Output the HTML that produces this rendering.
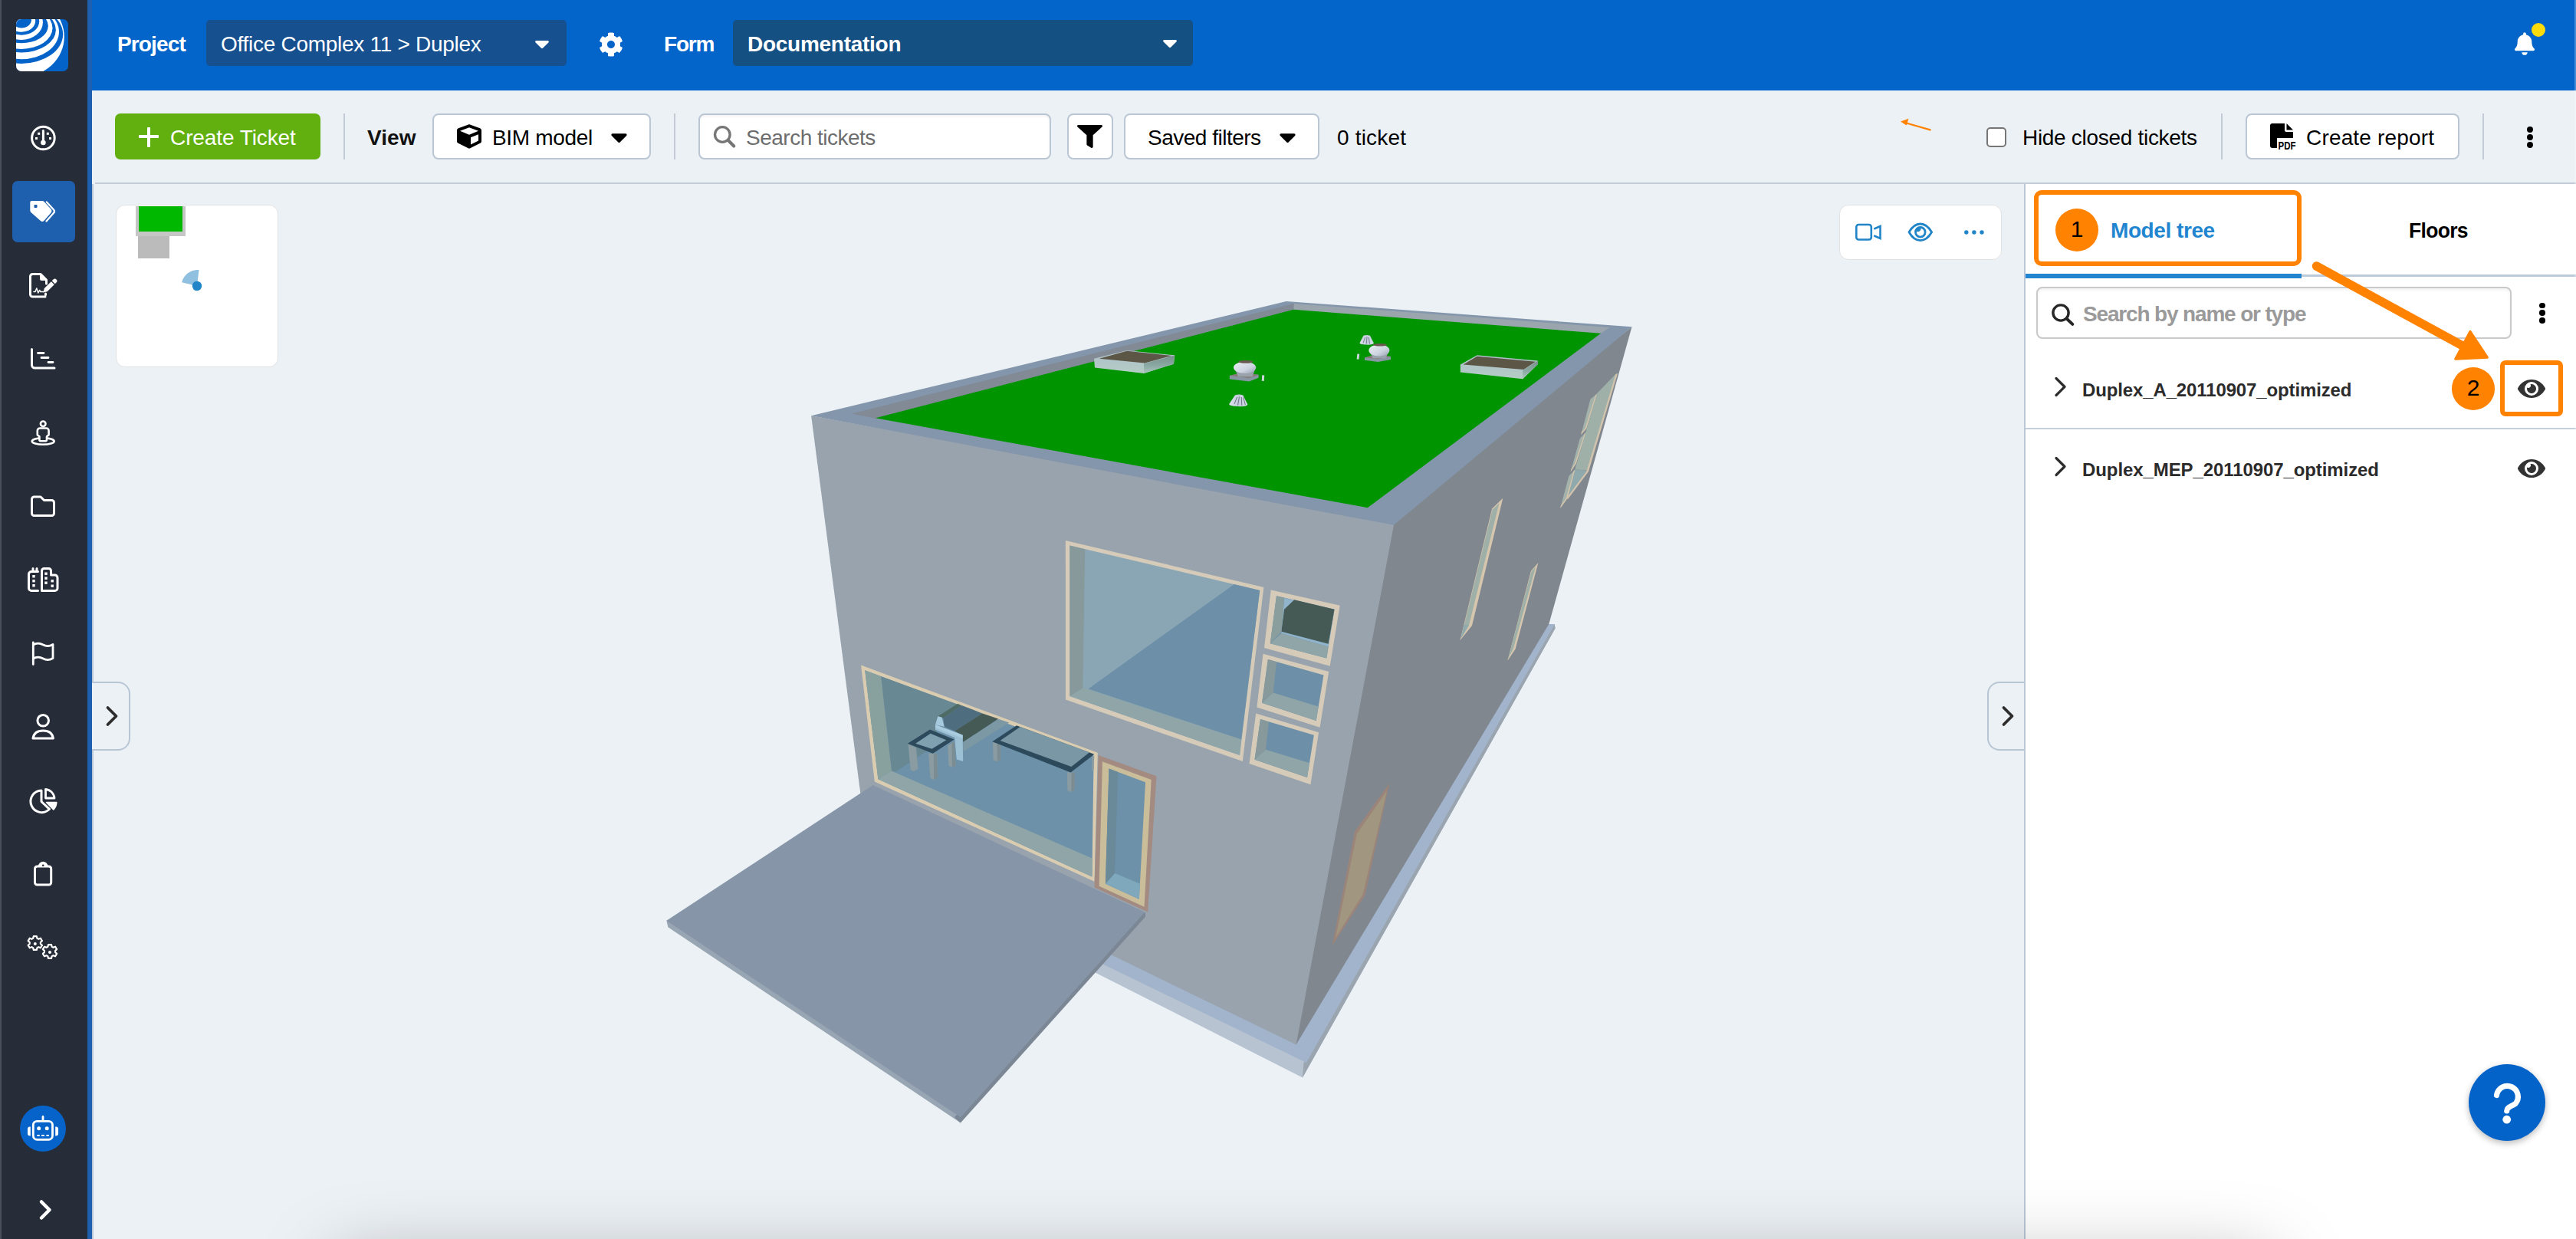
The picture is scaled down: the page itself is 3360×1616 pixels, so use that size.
<!DOCTYPE html>
<html><head><meta charset="utf-8"><title>BIM viewer</title>
<style>
html,body{margin:0;padding:0}
body{width:3360px;height:1616px;position:relative;overflow:hidden;background:#ecf1f5;font-family:"Liberation Sans",sans-serif;}
.a{position:absolute}
.t{position:absolute;white-space:nowrap;line-height:1;font-size:28px}
.b{font-weight:bold}
.w{color:#fff}
.btn{position:absolute;box-sizing:border-box;background:#fff;border:2px solid #bac6d3;border-radius:8px}
.vd{position:absolute;width:2px;background:#c3ccd6}
svg{position:absolute;overflow:visible}
</style></head><body>
<!-- BACKGROUND REGIONS -->
<div class="a" style="left:120px;top:0;width:3240px;height:118px;background:#0364c9"></div>
<div class="a" style="left:124px;top:238px;width:3236px;height:2px;background:#c3ccd6"></div>
<div class="a" style="left:120px;top:240px;width:2px;height:1376px;background:#bcc8d5"></div>
<!--BUILDING-->
<svg style="left:0;top:0" width="3360" height="1616" viewBox="0 0 3360 1616">
<!-- ground slab -->
<polygon points="1394.300,1251.200 1413.600,1228.100 1690.600,1362.600 2020.300,814 2027.600,814 2028.600,819.500 1699,1405.400" fill="#b7c3d1"/>
<polygon points="1700.500,1386.500 2027.600,814 2028.600,819.500 1699,1405.400" fill="#9aa5b0"/>
<polygon points="1413.600,1228.100 1690.600,1360 2018,814 2027.600,814 1703.900,1386.100 1402.700,1240.200" fill="#a2b4cc"/>
<!-- walls -->
<polygon points="1810,680 2128.500,426.300 2020.300,814 1690.600,1362.600 1686,1360" fill="#80878f"/>
<polygon points="1058.100,542.200 1818,681 1818,684.800 1690.600,1362.600 1129.500,1090" fill="#99a3ad"/>
<!-- roof -->
<polygon points="1058.100,542.200 1677.800,392.900 2128.500,426.300 1818,684.800" fill="#8496ab"/>
<polygon points="1111,539.600 1687.800,396 1689,404.500 1143,546" fill="#828a95"/>
<polygon points="1687.800,396 2099.700,427 2087,435.500 1687.300,404.500" fill="#9ba5ae"/>
<polygon points="1142,545.300 1687.300,403.800 2088.100,434.800 1783.900,662.300" fill="#009500"/>
<!--ROOFOBJ-->
<defs>
<linearGradient id="dm" x1="0" y1="0" x2="1" y2="1"><stop offset="0" stop-color="#eef1f5"/><stop offset=".6" stop-color="#cdd5e0"/><stop offset="1" stop-color="#98a2b2"/></linearGradient>
<linearGradient id="cn" x1="0" y1="0" x2="1" y2="0"><stop offset="0" stop-color="#dfe4ee"/><stop offset=".5" stop-color="#c3cbdb"/><stop offset="1" stop-color="#d5dbe8"/></linearGradient>
<linearGradient id="sf" x1="0" y1="0" x2="0" y2="1"><stop offset="0" stop-color="#aebfca"/><stop offset="1" stop-color="#b4cdc4"/></linearGradient><linearGradient id="sr" x1="0" y1="0" x2="0" y2="1"><stop offset="0" stop-color="#76908a"/><stop offset=".55" stop-color="#8aa9a2"/><stop offset="1" stop-color="#a9c6be"/></linearGradient>
</defs>
<!-- skylight 1 -->
<polygon points="1427,467.700 1469.900,457 1532.200,463.300 1531,474.700 1492,487 1428,479.400" fill="url(#sf)"/>
<polygon points="1492,474.200 1531.600,463.700 1531,474.700 1492,487" fill="url(#sr)"/>
<polygon points="1433.800,467.700 1469.900,457.800 1528.100,464 1493.200,473.600" fill="#5c5646"/>
<!-- skylight 2 -->
<polygon points="1904.800,475.600 1926.700,463.200 2006,470.400 2006,475 1986.100,494.200 1904.800,485.400" fill="url(#sf)"/>
<polygon points="1986.100,483.500 2006,470.400 2006,475 1986.100,494.200" fill="url(#sr)"/>
<polygon points="1908.600,475.600 1926.700,464.700 2002.900,471.700 1987.400,482" fill="#5c5646"/>
<!-- dome 1 -->
<polygon points="1603.800,489.900 1618,486.500 1641.600,488.700 1641.600,492.800 1629.400,497.400 1603.800,494.500" fill="#8896a4"/>
<polygon points="1603.800,489.900 1618,486.500 1641.600,488.700 1629.400,493" fill="#857a74"/>
<polygon points="1611,482 1637,482 1633.500,491.300 1615,491.300" fill="#9aa2ac"/>
<ellipse cx="1623.600" cy="479.300" rx="14.600" ry="7.600" fill="url(#dm)"/>
<ellipse cx="1624.800" cy="471.800" rx="9.800" ry="1.900" fill="#6a5a52"/>
<rect x="1646" y="489.300" width="3" height="7.600" fill="#d0d6de" transform="rotate(4 1647 493)"/>
<!-- dome 2 -->
<polygon points="1780,466.500 1794,462.500 1814,465 1814,469 1797.500,472 1780,469.800" fill="#8896a4"/>
<polygon points="1780,466.500 1794,462.500 1814,465 1797.500,468" fill="#857a74"/>
<polygon points="1787.300,459.500 1810.800,459.500 1807.500,467.300 1790.500,467.300" fill="#9aa2ac"/>
<ellipse cx="1798.900" cy="456.900" rx="13.500" ry="7.500" fill="url(#dm)"/>
<ellipse cx="1800" cy="449.800" rx="9" ry="1.800" fill="#6a5a52"/>
<rect x="1770" y="461.500" width="2.800" height="7" fill="#d0d6de" transform="rotate(6 1771 465)"/>
<!-- cones -->
<path d="M1610.800 515.500q5.200-1.800 10.500 0l6 12q-1 3.200-12.600 2.600t-11.500-3.200z" fill="url(#cn)"/>
<path d="M1613.500 518l-3.500 9M1616.500 517.500l-2 11M1619.300 518l.5 11M1621.800 518.500l2.500 9.500" stroke="#6d7686" stroke-width="1" fill="none"/>
<path d="M1778.500 437.800q4.200-1.500 8.400 0l5 9.800q-1 2.400-9.800 2t-8.600-2.400z" fill="url(#cn)"/>
<path d="M1780.500 440l-2.500 7.500M1783 439.500l-.8 9M1785.300 440l1.200 8.500" stroke="#6d7686" stroke-width=".9" fill="none"/>

<!--/ROOFOBJ-->
<!--FRONTWIN-->
<!-- big upper window -->
<polygon points="1389.900,705 1648.400,766 1620.800,993.100 1389.900,912.400" fill="#d5cbb8"/>
<polygon points="1395.400,711.400 1643.200,770 1617,985 1395.400,908" fill="#8aa6b5"/>
<polygon points="1609.800,762.100 1643.200,770 1619.100,964.600 1419.500,898.400" fill="#6d90a8"/>
<polygon points="1395.400,711.400 1415.200,716.300 1412.300,897.800 1395.400,908" fill="#87999a"/>
<polygon points="1395.400,908 1413.300,897.300 1619.100,964.600 1617,985" fill="#8fa5a8"/>
<!-- small windows -->
<polygon points="1657.700,769.500 1747.700,789.800 1734.700,868.800 1649,845" fill="#d5cbb8"/>
<polygon points="1665,777.300 1740.500,794.700 1730.300,858.600 1656.800,839.200" fill="#6d90a8"/>
<polygon points="1675.100,780 1740.500,794.700 1732.600,843.500 1671.400,826" fill="#8fb4cc"/>
<polygon points="1688.200,782.200 1740.500,794.700 1732.600,839.700 1671.400,823.800 1675.100,794.700" fill="#455955"/>
<polygon points="1665,777.300 1675.100,780 1671.400,823.800 1656.800,839.200" fill="#8b9e9e"/>
<polygon points="1656.800,839.200 1671.400,826 1732.600,843.500 1730.300,858.600" fill="#8fa5a8"/>
<polygon points="1647.500,852.800 1733.200,876 1721.600,948.700 1639.400,922.500" fill="#d5cbb8"/>
<polygon points="1653.900,860.100 1726.500,880.400 1716.700,940 1646.100,916.700" fill="#6d90a8"/>
<polygon points="1653.900,860.100 1665,863.600 1660.600,903.600 1646.100,916.700" fill="#87999a"/>
<polygon points="1646.100,916.700 1660.600,903.600 1719.600,921.600 1716.700,940" fill="#8fa5a8"/>
<polygon points="1638.200,930.400 1720.100,955.300 1709.400,1023.300 1629.500,996" fill="#d5cbb8"/>
<polygon points="1644,937.900 1713.800,958.800 1705,1014 1636.500,990.800" fill="#6d90a8"/>
<polygon points="1644,937.900 1654.800,941.400 1651,977.700 1636.500,990.800" fill="#87999a"/>
<polygon points="1636.500,990.800 1651,977.700 1707.700,995.100 1705,1014" fill="#8fa5a8"/>
<!-- lower window -->
<polygon points="1123,867.600 1431.800,981.700 1427.500,1149.700 1140.800,1019.400" fill="#d9ccb0"/>
<polygon points="1128.200,874.300 1426.600,985.700 1424.400,1143.600 1145.400,1016.300" fill="#6d91a9"/>
<polygon points="1149.100,882.300 1250.300,919.100 1223,935 1220,972 1169,1006.200 1162.900,1005.600" fill="#688894"/>
<polygon points="1128.200,874.300 1149.100,882.300 1162.900,1005.600 1145.400,1016.300" fill="#88a09e"/>
<polygon points="1145.400,1016.300 1162.900,1005.600 1425.100,1119.700 1424.400,1143.600" fill="#8fa5a8"/>
<!-- sofa -->
<polygon points="1256.200,967.800 1302.100,937.700 1316.300,942.600 1256.900,980.100" fill="#7b98a4"/>
<polygon points="1223.300,934.200 1249.100,918.100 1254.300,920 1230.400,936.800" fill="#4e6b66"/>
<polygon points="1230.400,936.800 1254.300,920 1281.400,930.400 1245.200,953.600 1231.700,947.800" fill="#4e6d7e"/>
<polygon points="1245.200,953.600 1281.400,930.400 1302.100,937.500 1256.200,967.800 1255.600,958.800" fill="#455955"/>
<polygon points="1223.300,934.200 1228.400,935.500 1231.700,947.800 1220,945.200" fill="#a6cade"/>
<polygon points="1220,945.200 1255.600,958.800 1256.200,993 1247.800,990.400 1245.200,962 1220,951.700" fill="#9cc0d4"/>
<polygon points="1220,945.200 1255.600,958.800 1255.700,963 1220,949" fill="#aacde0"/>
<!-- side table -->
<polygon points="1184.500,970.800 1194.900,974.900 1197.500,1002.700 1191.600,1005.900 1187.800,1004" fill="#8a9ca2"/>
<polygon points="1211,982.700 1222,982.700 1223.300,1013.700 1218.100,1016.900 1213.600,1014.900" fill="#8a9ca2"/>
<polygon points="1218,983 1222,982.700 1223.300,1013.700 1218.100,1016.900" fill="#7b8d92"/>
<polygon points="1236.200,972.300 1244.600,967.200 1246.500,998.200 1242,1000.700 1237.500,998.800" fill="#8a9ca2"/>
<polygon points="1241.500,969.500 1244.600,967.200 1246.500,998.200 1242,1000.700" fill="#7b8d92"/>
<polygon points="1183.900,969.700 1213,951.400 1244.600,964.600 1216.800,982.700" fill="#2c4a5c"/>
<polygon points="1194.200,969.700 1213.600,956.800 1234.300,965.200 1215.500,976.800" fill="#7fa0ae"/>
<!-- long table -->
<polygon points="1295,968.400 1304.600,969.700 1305.300,990.400 1300.800,993.600 1295.600,991" fill="#8a9ca2"/>
<polygon points="1300.500,969 1304.600,969.700 1305.300,990.400 1300.800,993.600" fill="#7b8d92"/>
<polygon points="1391.800,1007.200 1402.200,1007.800 1401.500,1030.400 1397.400,1033 1392.500,1031.100" fill="#8a9ca2"/>
<polygon points="1397.500,1007.500 1402.200,1007.800 1401.500,1030.400 1397.400,1033" fill="#7b8d92"/>
<polygon points="1424.100,987.800 1427.300,985.200 1426.700,1004.600 1424.100,1005.300" fill="#8a9ca2"/>
<polygon points="1294.300,967.200 1326,946.200 1427.300,983.700 1396.600,1007.500" fill="#2c4a5c"/>
<polygon points="1304.600,966.100 1330.700,948 1421.100,981.300 1397.400,1000.100" fill="#7a97a5"/>
<!-- door -->
<polygon points="1432.700,985 1508.500,1012.300 1497.100,1189.600 1427.500,1157.400" fill="#a38b82"/>
<polygon points="1437.900,993.300 1501.700,1016.900 1492.500,1182.800 1433.600,1155.800" fill="#c9bd9a"/>
<polygon points="1446.500,1002.500 1494,1020.300 1485.800,1172.700 1441.900,1152.800" fill="#6d91a9"/>
<polygon points="1446.500,1002.500 1458.200,1007.100 1454.200,1139 1441.900,1152.800" fill="#6a8a9a"/>
<polygon points="1441.900,1152.800 1454.200,1139 1487,1152.800 1485.800,1172.700" fill="#7fa8bc"/>

<!--/FRONTWIN-->
<!--RIGHTWIN-->
<!-- right wall: window A -->
<polygon points="2082.900,513.200 2108.300,487 2071,614.100 2054.400,612" fill="#9eb0a8"/>
<polygon points="2054.400,612 2069.500,613.900 2044.700,649.700" fill="#8fa9ad"/>
<polygon points="2107.300,488 2110,486.900 2072,615 2044.900,651.300 2043.600,649.300 2069.300,614.800" fill="#d2c3ac"/>
<polygon points="2074.400,520.800 2082.900,513.700 2069.300,559 2062.200,566.900" fill="#a3b3ab"/>
<polygon points="2081,515.300 2082.900,513.700 2069.300,559 2062.200,566.900 2062.900,563.500 2067.500,558.500" fill="#d2c3ac"/>
<polygon points="2060.800,571.700 2068.500,564.100 2055.800,604.700 2048.600,615.400" fill="#a3b3ab"/>
<polygon points="2066.600,566 2068.500,564.100 2055.800,604.700 2048.600,615.400 2049.300,612 2054,604.500" fill="#d2c3ac"/>
<polygon points="2046.400,620.800 2054.400,612.400 2044.700,649.700 2035.100,662.900" fill="#a3b3ab"/>
<polygon points="2052.500,614.400 2054.400,612.400 2044.700,649.700 2035.100,662.900 2036,659 2042.800,649.500" fill="#d2c3ac"/>
<!-- window B -->
<polygon points="1946.100,663.400 1960.300,649.800 1920,815.900 1904.400,835.300" fill="#d6c6ae"/>
<polygon points="1946.600,664.800 1955.500,656.300 1916,815.500 1905.600,832.500" fill="#9eb0a8"/>
<polygon points="1905.600,832.500 1909.500,815 1916,815.500" fill="#8fa9ad"/>
<!-- window C -->
<polygon points="1996.900,744.700 2006.400,733.900 1976.600,846.400 1966.400,861.700" fill="#d6c6ae"/>
<polygon points="1997.300,745.800 2003,739.500 1973.800,846.500 1967.300,858.500" fill="#9eb0a8"/>
<!-- side door -->
<polygon points="1767,1084.400 1812.200,1021.800 1780.600,1167.600 1737.600,1233.600" fill="#9b857a"/>
<polygon points="1769.900,1087.300 1808.800,1032 1777.600,1166.400 1742.100,1222.900" fill="#a1967f"/>

<!--/RIGHTWIN-->
<!-- terrace -->
<polygon points="869.400,1200.700 880,1200 1252.900,1450 1252.900,1464.600 871.300,1209.200" fill="#98a5b3"/>
<polygon points="1245,1457.200 1486,1189.800 1494,1190.500 1494,1195.700 1252.900,1464.600" fill="#7b8794"/>
<polygon points="1138.600,1024 1493.200,1189.800 1252.900,1457.200 869.400,1200.700" fill="#8795a8"/>
</svg>

<!--/BUILDING-->
<!--CANVASUI-->
<!-- minimap -->
<div class="a" style="left:151px;top:267px;width:212px;height:212px;box-sizing:border-box;background:#fff;border:1px solid #e2e2e2;border-radius:12px;overflow:hidden">
<div class="a" style="left:25px;top:1px;width:65px;height:39px;background:#c6c6c6"></div>
<div class="a" style="left:29px;top:1px;width:57px;height:33px;background:#00b800"></div>
<div class="a" style="left:28px;top:40px;width:41px;height:29px;background:#bbb"></div>
</div>
<svg style="left:151px;top:267px" width="212" height="212" viewBox="151 267 212 212"><path d="M257 373L237.200 368.200A21 21 0 0 1 259.500 352z" fill="#90c0e0"/><circle cx="257" cy="373" r="6.200" fill="#2185c8"/></svg>
<!-- viewer tools -->
<div class="a" style="left:2399px;top:267px;width:212px;height:72px;box-sizing:border-box;background:#fff;border:1px solid #e2e2e2;border-radius:12px"></div>
<svg style="left:2399px;top:267px" width="212" height="72" viewBox="2399 267 212 72" fill="none" stroke="#2185c8" stroke-width="2.600" stroke-linejoin="round" stroke-linecap="round">
<rect x="2421.300" y="293" width="19.500" height="19.500" rx="3"/>
<path d="M2445.200 298.200l7.300-3.200v16l-7.300-3.200" stroke-linejoin="miter"/>
<path d="M2490 302.800c4-7 9-10.800 14.800-10.800s10.800 3.800 14.800 10.800c-4 7-9 10.800-14.800 10.800s-10.800-3.800-14.800-10.800z" stroke-width="2.800"/>
<circle cx="2504.800" cy="302.800" r="6.300" stroke-width="2.800"/>
<path d="M2504.800 296.500a6.300 6.300 0 0 0-6 4.300a3.700 3.700 0 0 0 6-4.300z" fill="#2185c8" stroke="none"/>
<g fill="#2185c8" stroke="none"><circle cx="2564.800" cy="303" r="2.700"/><circle cx="2574.900" cy="303" r="2.700"/><circle cx="2585" cy="303" r="2.700"/></g>
</svg>
<!-- expand buttons -->
<div class="a" style="left:120px;top:889px;width:50px;height:90px;box-sizing:border-box;border:2px solid #b7c5d4;border-left:none;border-radius:0 16px 16px 0;background:#ecf1f5"></div>
<svg style="left:136px;top:919px" width="20" height="30" viewBox="0 0 20 30"><path d="M4.500 4l11 11-11 11" fill="none" stroke="#2d2d2d" stroke-width="3.800" stroke-linecap="round" stroke-linejoin="round"/></svg>
<div class="a" style="left:2592px;top:889px;width:50px;height:90px;box-sizing:border-box;border:2px solid #b7c5d4;border-right:none;border-radius:16px 0 0 16px;background:#ecf1f5"></div>
<svg style="left:2609px;top:919px" width="20" height="30" viewBox="0 0 20 30"><path d="M4.500 4l11 11-11 11" fill="none" stroke="#2d2d2d" stroke-width="3.800" stroke-linecap="round" stroke-linejoin="round"/></svg>

<!--/CANVASUI-->
<!-- RIGHT PANEL -->
<div class="a" style="left:2640px;top:240px;width:720px;height:1376px;background:#fff;border-left:2px solid #b9c7d6;box-sizing:border-box"></div>
<!--PANEL-->
<!-- tabs underline -->
<div class="a" style="left:2642px;top:358px;width:718px;height:3px;background:#bccbd9"></div>
<div class="a" style="left:2642px;top:357px;width:360px;height:6px;background:#2185d0"></div>
<!-- orange box 1 -->
<div class="a" style="left:2653px;top:248px;width:349px;height:99px;box-sizing:border-box;border:6px solid #ff8200;border-radius:10px"></div>
<div class="a" style="left:2681px;top:272px;width:56px;height:56px;border-radius:50%;background:#ff8200"></div>
<span class="t" style="left:2681px;top:284px;width:56px;text-align:center;font-size:30px;color:#000">1</span>
<span class="t b" style="left:2753px;top:287px;color:#2185d0;letter-spacing:-0.43px">Model tree</span>
<span class="t b" style="left:3142px;top:287px;color:#000;letter-spacing:-0.7px;transform:scaleX(.945);transform-origin:0 0">Floors</span>
<!-- search -->
<div class="a" style="left:2656px;top:374px;width:620px;height:68px;box-sizing:border-box;background:#fff;border:2px solid #c9c9c9;border-radius:8px;box-shadow:inset 0 2px 4px rgba(0,0,0,.06)"></div>
<svg style="left:2675px;top:396px" width="32" height="32" viewBox="0 0 32 32" fill="none" stroke="#262626" stroke-linecap="round"><circle cx="13" cy="12" r="10.100" stroke-width="3.400"/><path d="M20.500 19.500l7.800 7.400" stroke-width="4"/></svg>
<span class="t b" style="left:2717px;top:396px;color:#9a9a9a;letter-spacing:-1.16px">Search by name or type</span>
<div class="a" style="left:3312px;top:394.500px;width:7.500px;height:7.500px;border-radius:50%;background:#000"></div>
<div class="a" style="left:3312px;top:404.300px;width:7.500px;height:7.500px;border-radius:50%;background:#000"></div>
<div class="a" style="left:3312px;top:414px;width:7.500px;height:7.500px;border-radius:50%;background:#000"></div>
<!-- rows -->
<svg style="left:2678px;top:490px" width="20" height="30" viewBox="0 0 20 30"><path d="M4 3.500l11 11-11 11" fill="none" stroke="#2d2d2d" stroke-width="3.200" stroke-linecap="round" stroke-linejoin="round"/></svg>
<span class="t b" style="left:2716px;top:496.500px;font-size:24px;color:#2b2b2b;letter-spacing:-0.13px">Duplex_A_20110907_optimized</span>
<div class="a" style="left:3198px;top:479px;width:56px;height:56px;border-radius:50%;background:#ff8200"></div>
<span class="t" style="left:3198px;top:491px;width:56px;text-align:center;font-size:30px;color:#000">2</span>
<div class="a" style="left:3261px;top:470px;width:82px;height:73px;box-sizing:border-box;border:6px solid #ff8200;border-radius:7px"></div>
<svg style="left:3284px;top:491px" width="36" height="32" viewBox="0 0 576 512"><path fill="#333" d="M572.520 241.400C518.290 135.590 410.930 64 288 64S57.680 135.640 3.480 241.410a32.350 32.350 0 0 0 0 29.190C57.710 376.410 165.070 448 288 448s230.320-71.640 284.520-177.410a32.350 32.350 0 0 0 0-29.190zM288 400a144 144 0 1 1 144-144 143.930 143.930 0 0 1-144 144zm0-240a95.310 95.310 0 0 0-25.310 3.790 47.850 47.850 0 0 1-66.900 66.900A95.780 95.780 0 1 0 288 160z"/></svg>
<div class="a" style="left:2642px;top:558px;width:718px;height:2px;background:#c3cfdb"></div>
<svg style="left:2678px;top:594px" width="20" height="30" viewBox="0 0 20 30"><path d="M4 3.500l11 11-11 11" fill="none" stroke="#2d2d2d" stroke-width="3.200" stroke-linecap="round" stroke-linejoin="round"/></svg>
<span class="t b" style="left:2716px;top:600.500px;font-size:24px;color:#2b2b2b;letter-spacing:-0.09px">Duplex_MEP_20110907_optimized</span>
<svg style="left:3284px;top:595px" width="36" height="32" viewBox="0 0 576 512"><path fill="#333" d="M572.520 241.400C518.290 135.590 410.930 64 288 64S57.680 135.640 3.480 241.410a32.350 32.350 0 0 0 0 29.190C57.710 376.410 165.070 448 288 448s230.320-71.640 284.520-177.410a32.350 32.350 0 0 0 0-29.190zM288 400a144 144 0 1 1 144-144 143.930 143.930 0 0 1-144 144zm0-240a95.310 95.310 0 0 0-25.310 3.790 47.850 47.850 0 0 1-66.900 66.900A95.780 95.780 0 1 0 288 160z"/></svg>
<!-- arrow -->
<svg style="left:3000px;top:330px" width="260" height="150" viewBox="3000 330 260 150"><path d="M3021.600 347.100L3213 451.500" stroke="#ff8200" stroke-width="11.600" stroke-linecap="round" fill="none"/><path d="M3222 432.300L3244.400 466.200L3202.700 468.200z" fill="#ff8200" stroke="#ff8200" stroke-width="3" stroke-linejoin="round"/></svg>
<!-- help -->
<div class="a" style="left:3220px;top:1388px;width:100px;height:100px;border-radius:50%;background:#0363c9;box-shadow:0 3px 9px rgba(0,0,0,.28)"></div>
<svg style="left:3220px;top:1388px" width="100" height="100" viewBox="3220 1388 100 100"><path d="M3256.500 1428.500A14 14 0 1 1 3281 1439.500C3275 1443.500 3269.700 1444 3269.700 1449" fill="none" stroke="#fff" stroke-width="7.200" stroke-linecap="round"/><circle cx="3269.700" cy="1460.200" r="5.400" fill="#fff"/></svg>

<!--/PANEL-->
<!--SHADOW-->
<div class="a" style="left:440px;top:1650px;width:2520px;height:100px;box-shadow:0 0 100px 0 rgba(0,0,0,.34)"></div>
<div class="a" style="left:3358px;top:0;width:2px;height:1616px;background:rgba(255,255,255,.25)"></div>

<!--/SHADOW-->
<!-- SIDEBAR -->
<div class="a" style="left:0;top:0;width:114px;height:1616px;background:#262c38"></div>
<div class="a" style="left:0;top:0;width:2px;height:1616px;background:#4a4f59"></div>
<div class="a" style="left:114px;top:0;width:6px;height:1616px;background:#1e60b0"></div>
<!--SIDEBAR-->
<svg style="left:0;top:0" width="114" height="1616" viewBox="0 0 114 1616" fill="none" stroke="#fff" stroke-width="3" stroke-linecap="round" stroke-linejoin="round">
<!-- logo -->
<defs><clipPath id="lg"><rect x="21" y="25" width="68" height="68" rx="7"/></clipPath></defs>
<g clip-path="url(#lg)" stroke="none">
<rect x="21" y="25" width="68" height="68" fill="#0363c9"/>
<ellipse cx="27.91" cy="48.05" rx="55.86" ry="52.26" fill="#fff"/>
<ellipse cx="27.91" cy="44.82" rx="54.25" ry="38.08" fill="#0363c9"/>
<ellipse cx="27.91" cy="41.60" rx="49.07" ry="35.54" fill="#fff"/>
<ellipse cx="27.91" cy="39.01" rx="44.97" ry="29.41" fill="#0363c9"/>
<ellipse cx="27.91" cy="36.43" rx="40.59" ry="27.52" fill="#fff"/>
<ellipse cx="27.91" cy="33.85" rx="34.93" ry="22.40" fill="#0363c9"/>
<ellipse cx="27.91" cy="29.33" rx="28.00" ry="22.66" fill="#fff"/>
<ellipse cx="27.91" cy="28.04" rx="23.31" ry="17.59" fill="#0363c9"/>
<ellipse cx="27.91" cy="27.07" rx="18.29" ry="14.66" fill="#fff"/>
<ellipse cx="27.91" cy="26.10" rx="13.01" ry="10.32" fill="#0363c9"/>
</g>
<!-- gauge -->
<circle cx="56.400" cy="180" r="14.800"/>
<path d="M56.400 170.500V184" stroke-width="3"/>
<circle cx="56.400" cy="186" r="3.300" fill="#fff" stroke="none"/>
<g fill="#fff" stroke="none"><rect x="46" y="179" width="3" height="3"/><rect x="49.200" y="172.800" width="3" height="3"/><rect x="60.800" y="172.800" width="3" height="3"/><rect x="64" y="179" width="3" height="3"/></g>
<!-- active tags -->
<rect x="16" y="236" width="82" height="80" rx="7" fill="#1e5fae" stroke="none"/>
<path d="M41.500 262h13.800a3 3 0 0 1 2.200 1l9 9.800a3.500 3.500 0 0 1 0 4.600l-9 10.300a3.200 3.200 0 0 1-4.600.2L40.400 277a3.500 3.500 0 0 1-1.100-2.500V264.300a2.200 2.200 0 0 1 2.200-2.300z" fill="#fff" stroke="none"/>
<rect x="44.500" y="267" width="4" height="4" rx=".8" fill="#1e5fae" stroke="none"/>
<path d="M60.800 263.500l9.200 10a3.200 3.200 0 0 1 0 4.300l-9.500 10.700" stroke-width="2.300"/>
<!-- doc sign -->
<path d="M59 387H42.500a3 3 0 0 1-3-3V360.500a3 3 0 0 1 3-3H53l7.500 7.500v5M59.500 383v1.500" stroke-width="3"/>
<path d="M52 357.500v6a2.500 2.500 0 0 0 2.500 2.500H60.500z" fill="#fff" stroke="none"/>
<path d="M44 380.500h2l1.800-4.500 2 6 1.800-3.500 1.200 2h4" stroke-width="1.500"/>
<path d="M56.500 381.500l1.200-5.200 11.800-11.800a2.800 2.800 0 0 1 4 4L61.700 380.300z" fill="#fff" stroke="none"/>
<path d="M67.300 366.700l4 4" stroke="#262c38" stroke-width="1.300"/>
<!-- gantt -->
<path d="M41.500 455.500v20.500a4 4 0 0 0 4 4H71"/>
<path d="M49.500 460.500h7.500M54 466.500h9M63 472.500h6" stroke-width="2.800"/>
<!-- person pin -->
<ellipse cx="56.200" cy="575.500" rx="14.500" ry="4.300" stroke-width="2.600"/>
<path d="M52 558.500h8.400a3.200 3.200 0 0 1 3.200 3.200v5.500l-2.600 2v4.300a1.800 1.800 0 0 1-1.800 1.800h-6a1.800 1.800 0 0 1-1.800-1.800v-4.300l-2.600-2v-5.500a3.200 3.200 0 0 1 3.200-3.200z" fill="#262c38" stroke-width="2.600"/>
<circle cx="56.200" cy="552.800" r="3.300" stroke-width="2.600"/>
<!-- folder -->
<path d="M41.500 651a3 3 0 0 1 3-3h8.500l4.500 4.500h10a3 3 0 0 1 3 3v14a3 3 0 0 1-3 3h-23a3 3 0 0 1-3-3z"/>
<!-- buildings -->
<path d="M49.500 770.500h-8.500a3.500 3.500 0 0 1-3.500-3.500v-18a3.500 3.500 0 0 1 3.500-3.500h8.500M43 745.500v-4M48 745.500v-4" stroke-width="3"/>
<path d="M54.500 744.500a3 3 0 0 1 3-3h6a3 3 0 0 1 3 3v5.500h5a3.500 3.500 0 0 1 3.500 3.500v13.500a3.500 3.500 0 0 1-3.500 3.500h-17z" stroke-width="3"/>
<g fill="#fff" stroke="none"><rect x="42.300" y="750" width="3.400" height="3.400"/><rect x="42.300" y="756" width="3.400" height="3.400"/><rect x="42.300" y="762" width="3.400" height="3.400"/><rect x="58.300" y="746.500" width="3.400" height="3.400"/><rect x="58.300" y="752.500" width="3.400" height="3.400"/><rect x="58.300" y="758.500" width="3.400" height="3.400"/><rect x="66.500" y="756" width="3.400" height="3.400"/><rect x="66.500" y="762.500" width="3.400" height="3.400"/></g>
<!-- flag -->
<path d="M43.300 838v28.500M43.300 841c4-2.500 8.500-2.500 13 0s8.500 2 12.700-.5v18c-4.200 2.500-8.200 3-12.700.5s-9-2.500-13 0" stroke-width="2.800"/>
<!-- user -->
<circle cx="56.200" cy="939.800" r="7.300" stroke-width="3"/>
<path d="M43 963c1-6.500 6-10 13.200-10s12.200 3.500 13.200 10z" stroke-width="3"/>
<!-- pie -->
<path d="M54 1031a14.300 14.300 0 1 0 10.500 24.300L54 1045.500z" stroke-width="3"/>
<path d="M59.500 1029.500a12.500 12.500 0 0 1 11.500 11.500H59.500z" stroke-width="2.800"/>
<path d="M60.500 1046.500h13.300a14 14 0 0 1-4 9.500z" fill="#fff" stroke-width="1.500"/>
<!-- clipboard -->
<rect x="45.500" y="1130" width="21.200" height="24" rx="3"/>
<path d="M51 1130a5.200 5.200 0 0 1 10.400 0z" fill="#fff" stroke-width="2"/>
<circle cx="56.200" cy="1128.800" r="1.300" fill="#262c38" stroke="none"/>
<!-- gears -->
<g stroke-width="2.200">
<path id="gr" d="M-2-9.800h4l.7 2.700 1.700.9 2.700-1.100 2 3.400-2 1.900v2l2 1.900-2 3.400-2.700-1.100-1.700.9-.7 2.800h-4l-.7-2.800-1.700-.9-2.700 1.100-2-3.400 2-1.900v-2l-2-1.900 2-3.400 2.700 1.100 1.700-.9z" transform="translate(45.800 1231)"/>
<path d="M-2-9.800h4l.7 2.700 1.700.9 2.700-1.100 2 3.400-2 1.900v2l2 1.900-2 3.400-2.700-1.100-1.700.9-.7 2.800h-4l-.7-2.800-1.700-.9-2.700 1.100-2-3.400 2-1.900v-2l-2-1.900 2-3.400 2.700 1.100 1.700-.9z" transform="translate(65 1242)"/>
</g>
<circle cx="45.800" cy="1231" r="2" fill="#fff" stroke="none"/><circle cx="65" cy="1242" r="2" fill="#fff" stroke="none"/>
<!-- robot -->
<circle cx="56" cy="1472" r="30" fill="#0563c9" stroke="none"/>
<rect x="43.300" y="1462.300" width="25.200" height="24" rx="5" stroke-width="2.800"/>
<path d="M56 1456.500v5" stroke-width="2.800"/>
<path d="M39.800 1469.500h-.8a3 3 0 0 0-3 3v6a3 3 0 0 0 3 3h.8zM72.200 1469.500h.8a3 3 0 0 1 3 3v6a3 3 0 0 1-3 3h-.8z" fill="#fff" stroke="none"/>
<circle cx="50.700" cy="1471.800" r="2.500" fill="#fff" stroke="none"/><circle cx="61.200" cy="1471.800" r="2.500" fill="#fff" stroke="none"/>
<path d="M48.300 1481h3.400M54 1481h4M60.400 1481h3.400" stroke-width="2" stroke-linecap="butt"/>
<!-- chevron -->
<path d="M54 1567.500l10.500 10.500-10.500 10.500" stroke-width="4.500"/>
</svg>

<!--/SIDEBAR-->
<!--HEADER-->
<span class="t b w" style="left:153px;top:44px;letter-spacing:-0.87px">Project</span>
<div class="a" style="left:269px;top:26px;width:470px;height:60px;background:#17508f;border-radius:5px"></div>
<span class="t w" style="left:288px;top:44px;letter-spacing:-0.28px">Office Complex 11 &gt; Duplex</span>
<svg style="left:697px;top:52px" width="20" height="13" viewBox="0 0 20 13"><path d="M2.6 1h14.8c1.3 0 1.9 1.5 1 2.4l-7.4 7.4c-.6.6-1.4.6-2 0L1.600 3.400C.7 2.500 1.300 1 2.600 1z" fill="#fff"/></svg>
<svg style="left:781px;top:42px" width="32" height="32" viewBox="0 0 512 512"><path fill="#fff" d="M487.4 315.7l-42.6-24.6c4.3-23.2 4.3-47 0-70.2l42.600-24.600c4.900-2.800 7.100-8.600 5.500-14-11.100-35.600-30-67.800-54.700-94.600-3.800-4.100-10-5.100-14.800-2.300L380.800 110c-17.900-15.400-38.500-27.300-60.800-35.100V25.800c0-5.600-3.900-10.500-9.400-11.700-36.700-8.200-74.300-7.800-109.200 0-5.500 1.200-9.400 6.100-9.400 11.700V75c-22.200 7.900-42.800 19.800-60.800 35.100L88.700 85.500c-4.900-2.800-11-1.900-14.800 2.300-24.700 26.700-43.600 58.900-54.700 94.600-1.700 5.400.6 11.200 5.500 14L67.300 221c-4.300 23.200-4.300 47 0 70.200l-42.600 24.600c-4.900 2.800-7.100 8.600-5.500 14 11.100 35.600 30 67.800 54.700 94.600 3.800 4.100 10 5.100 14.800 2.300l42.600-24.600c17.900 15.400 38.500 27.300 60.800 35.100v49.200c0 5.600 3.900 10.500 9.400 11.700 36.700 8.200 74.300 7.800 109.200 0 5.500-1.200 9.400-6.100 9.400-11.700v-49.200c22.200-7.900 42.800-19.800 60.800-35.100l42.600 24.600c4.900 2.800 11 1.900 14.800-2.300 24.700-26.700 43.600-58.900 54.700-94.600 1.500-5.500-.7-11.300-5.600-14.100zM256 336c-44.100 0-80-35.900-80-80s35.900-80 80-80 80 35.900 80 80-35.900 80-80 80z"/></svg>
<span class="t b w" style="left:866px;top:44px;letter-spacing:-1.17px">Form</span>
<div class="a" style="left:956px;top:26px;width:600px;height:60px;background:#155082;border-radius:5px"></div>
<span class="t b w" style="left:975px;top:44px;letter-spacing:-0.27px">Documentation</span>
<svg style="left:1516px;top:51px" width="20" height="13" viewBox="0 0 20 13"><path d="M2.6 1h14.8c1.3 0 1.9 1.5 1 2.4l-7.4 7.4c-.6.6-1.4.6-2 0L1.600 3.400C.7 2.500 1.300 1 2.600 1z" fill="#fff"/></svg>
<svg style="left:3280px;top:42px" width="26" height="30" viewBox="0 0 448 512"><path fill="#fff" d="M224 512c35.320 0 63.970-28.650 63.970-64H160.030c0 35.350 28.650 64 63.970 64zm215.390-149.710c-19.320-20.760-55.470-51.990-55.470-154.290 0-77.700-54.480-139.900-127.940-155.160V32c0-17.670-14.320-32-31.980-32s-31.980 14.330-31.980 32v20.840C118.560 68.100 64.080 130.300 64.080 208c0 102.300-36.150 133.530-55.470 154.290-6 6.450-8.660 14.160-8.610 21.710.110 16.400 12.980 32 32.100 32h383.800c19.120 0 32-15.600 32.100-32 .050-7.550-2.610-15.270-8.610-21.710z"/></svg>
<div class="a" style="left:3302px;top:30px;width:18px;height:18px;border-radius:50%;background:#ffdb08"></div>

<!--/HEADER-->
<!--TOOLBAR-->
<div class="a" style="left:150px;top:148px;width:268px;height:60px;background:#62b010;border-radius:7px"></div>
<div class="a" style="left:181px;top:176px;width:26px;height:4px;background:#fff;border-radius:1px"></div>
<div class="a" style="left:192px;top:165.600px;width:4px;height:26px;background:#fff;border-radius:1px"></div>
<span class="t w" style="left:222px;top:165.600px;letter-spacing:-0.09px">Create Ticket</span>
<div class="vd" style="left:448px;top:148px;height:60px"></div>
<span class="t b" style="left:479px;top:165.600px;color:#111;letter-spacing:0.06px">View</span>
<div class="btn" style="left:564px;top:148px;width:285px;height:60px"></div>
<svg style="left:596px;top:162px" width="32" height="32" viewBox="0 0 512 512"><path fill="#000" d="M239.100 6.300l-208 78c-18.700 7-31.100 25-31.100 45v225.100c0 18.200 10.300 34.800 26.500 42.900l208 104c13.500 6.800 29.400 6.800 42.900 0l208-104c16.300-8.100 26.500-24.800 26.500-42.900V129.300c0-20-12.400-37.900-31.100-44.900l-208-78C262 2.200 250 2.200 239.100 6.300zM256 68.400l192 72v1.100l-192 78-192-78v-1.100l192-72zm32 356V275.500l160-65v133.900l-160 80z"/></svg>
<span class="t" style="left:642px;top:165.600px;color:#000;letter-spacing:-0.33px">BIM model</span>
<svg style="left:796px;top:173px" width="23" height="15" viewBox="0 0 20 13"><path d="M2.600 1h14.800c1.300 0 1.900 1.500 1 2.400l-7.400 7.400c-.6.6-1.400.6-2 0L1.600 3.400C.700 2.500 1.300 1 2.600 1z" fill="#000"/></svg>
<div class="vd" style="left:879px;top:148px;height:60px"></div>
<div class="btn" style="left:911px;top:148px;width:460px;height:60px;box-shadow:inset 0 2px 3px rgba(34,36,38,.06)"></div>
<svg style="left:930px;top:163px" width="30" height="30" viewBox="0 0 30 30" fill="none" stroke="#767676" stroke-linecap="round"><circle cx="12.300" cy="12.500" r="9.800" stroke-width="3.300"/><path d="M19.800 20l7.400 7.400" stroke-width="4.200"/></svg>
<span class="t" style="left:973px;top:165.600px;color:#6d6d6d;letter-spacing:-0.5px">Search tickets</span>
<div class="btn" style="left:1392px;top:148px;width:60px;height:60px"></div>
<svg style="left:1405px;top:163px" width="33" height="30" viewBox="0 0 512 512" preserveAspectRatio="none"><path fill="#000" d="M487.976 0H24.028C2.710 0-8.047 25.866 7.058 40.971L192 225.941V432c0 7.831 3.821 15.170 10.237 19.662l80 55.980C298.020 518.690 320 507.493 320 487.980V225.941l184.947-184.970C520.021 25.896 509.338 0 487.976 0z"/></svg>
<div class="btn" style="left:1466px;top:148px;width:255px;height:60px"></div>
<span class="t" style="left:1497px;top:165.600px;color:#000;letter-spacing:-0.5px">Saved filters</span>
<svg style="left:1668px;top:173px" width="23" height="15" viewBox="0 0 20 13"><path d="M2.600 1h14.800c1.300 0 1.900 1.500 1 2.400l-7.400 7.400c-.6.6-1.400.6-2 0L1.600 3.400C.700 2.500 1.300 1 2.600 1z" fill="#000"/></svg>
<span class="t" style="left:1744px;top:165.600px;color:#000;letter-spacing:0.19px">0 ticket</span>
<svg style="left:2470px;top:150px" width="60" height="30" viewBox="2470 150 60 30"><path d="M2518.500 169.600L2483 159.500" stroke="#ff8200" stroke-width="2.200" fill="none"/><path d="M2479 158.400l10.500-3.600-2.800 8.800z" fill="#ff8200"/></svg>
<div class="a" style="left:2591px;top:165.600px;width:26px;height:26px;box-sizing:border-box;border:2px solid #767676;border-radius:5px;background:#fff"></div>
<span class="t" style="left:2638px;top:165.600px;color:#000;letter-spacing:-0.3px">Hide closed tickets</span>
<div class="vd" style="left:2897px;top:148px;height:60px"></div>
<div class="btn" style="left:2929px;top:148px;width:279px;height:60px"></div>
<svg style="left:2961px;top:161px" width="34" height="34" viewBox="0 0 34 34"><path d="M0 3a3 3 0 0 1 3-3h16v9a2 2 0 0 0 2 2h9v8H9v13H3a3 3 0 0 1-3-3z" fill="#000"/><path d="M21.500 0l8.500 8.500h-8.500z" fill="#000"/><text x="10.500" y="33.500" font-family="Liberation Sans" font-weight="bold" font-size="14.500" fill="#000" textLength="23" lengthAdjust="spacingAndGlyphs">PDF</text></svg>
<span class="t" style="left:3008px;top:165.600px;color:#000;letter-spacing:0.17px">Create report</span>
<div class="vd" style="left:3238px;top:148px;height:60px"></div>
<div class="a" style="left:3296px;top:164.500px;width:8px;height:8px;border-radius:50%;background:#000"></div>
<div class="a" style="left:3296px;top:174.500px;width:8px;height:8px;border-radius:50%;background:#000"></div>
<div class="a" style="left:3296px;top:184.500px;width:8px;height:8px;border-radius:50%;background:#000"></div>

<!--/TOOLBAR-->
</body></html>
